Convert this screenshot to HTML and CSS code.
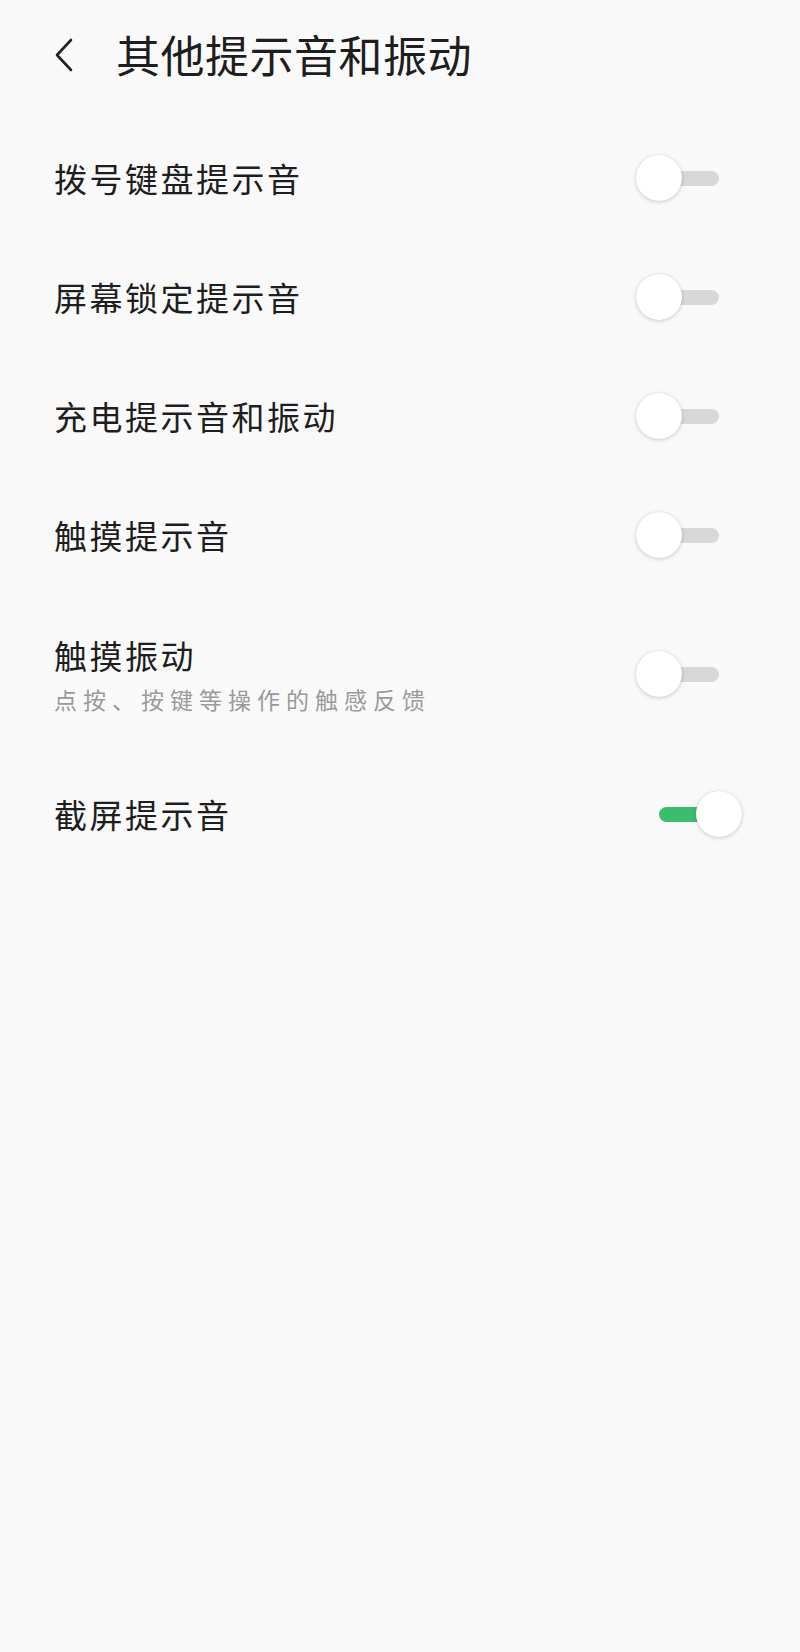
FILE: index.html
```html
<!DOCTYPE html>
<html lang="zh-CN">
<head>
    <meta charset="UTF-8">
    <meta name="viewport" content="width=device-width, initial-scale=1.0">
    <title>其他提示音和振动</title>
    <link rel="stylesheet" href="styles.css">
</head>
<body>
    <div class="page">
        <div class="header">
            <svg class="back" width="20" height="34" viewBox="0 0 20 34">
                <polyline points="17,2 3,17 17,32" fill="none" stroke="#222" stroke-width="2.6" stroke-linecap="round" stroke-linejoin="round"/>
            </svg>
            <h1>其他提示音和振动</h1>
        </div>

        <div class="list">
            <div class="row">
                <div class="text"><div class="name">拨号键盘提示音</div></div>
                <div class="switch"><span class="track"></span><span class="knob"></span></div>
            </div>
            <div class="row">
                <div class="text"><div class="name">屏幕锁定提示音</div></div>
                <div class="switch"><span class="track"></span><span class="knob"></span></div>
            </div>
            <div class="row">
                <div class="text"><div class="name">充电提示音和振动</div></div>
                <div class="switch"><span class="track"></span><span class="knob"></span></div>
            </div>
            <div class="row">
                <div class="text"><div class="name">触摸提示音</div></div>
                <div class="switch"><span class="track"></span><span class="knob"></span></div>
            </div>
            <div class="row tall">
                <div class="text">
                    <div class="name">触摸振动</div>
                    <div class="desc">点按、按键等操作的触感反馈</div>
                </div>
                <div class="switch"><span class="track"></span><span class="knob"></span></div>
            </div>
            <div class="row">
                <div class="text"><div class="name">截屏提示音</div></div>
                <div class="switch on"><span class="track"></span><span class="knob"></span></div>
            </div>
        </div>
    </div>
</body>
</html>
```

FILE: styles.css
```css
* {
    box-sizing: border-box;
    margin: 0;
    padding: 0;
}

body {
    font-family: "Noto Sans CJK SC", "Noto Sans", sans-serif;
    background: #f9f9f9;
    color: #1e1e1e;
    min-height: 100vh;
}

.header {
    height: 108px;
    display: flex;
    align-items: center;
    padding-left: 54px;
}

.back {
    display: block;
    margin-top: 2px;
}

.header h1 {
    font-size: 44px;
    font-weight: 400;
    letter-spacing: 0.5px;
    line-height: 50px;
    margin-left: 42px;
    color: #1e1e1e;
}

.list {
    padding-top: 10px;
}

.row {
    min-height: 119px;
    display: flex;
    align-items: center;
    justify-content: space-between;
    padding: 0 58px 0 54px;
}

.row.tall {
    min-height: 160px;
}

.name {
    font-size: 33px;
    letter-spacing: 2.5px;
    line-height: 40px;
}

.desc {
    font-size: 23px;
    letter-spacing: 6px;
    line-height: 30px;
    margin-top: 9px;
    color: #9a9a9a;
}

.switch {
    position: relative;
    width: 106px;
    height: 48px;
    flex-shrink: 0;
}

.track {
    position: absolute;
    left: 23px;
    right: 23px;
    top: 17px;
    height: 15px;
    border-radius: 8px;
    background: #d8d8d8;
}

.knob {
    position: absolute;
    left: 0;
    top: 1px;
    width: 46px;
    height: 46px;
    border-radius: 50%;
    background: #fff;
    box-shadow: 0 1px 4px rgba(0, 0, 0, 0.18), 0 0 1px rgba(0, 0, 0, 0.12);
}

.switch.on .track {
    background: #3cbd6e;
}

.switch.on .knob {
    left: 60px;
}
```
